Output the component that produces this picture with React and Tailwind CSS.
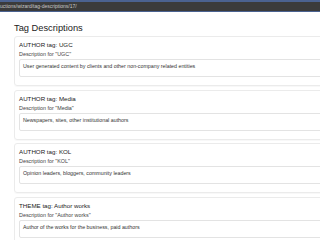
import React from 'react';

const tags = [
    { kind: 'AUTHOR', name: 'UGC', text: 'User generated content by clients and other non-company related entities' },
    { kind: 'AUTHOR', name: 'Media', text: 'Newspapers, sites, other institutional authors' },
    { kind: 'AUTHOR', name: 'KOL', text: 'Opinion leaders, bloggers, community leaders' },
    { kind: 'THEME', name: 'Author works', text: 'Author of the works for the business, paid authors' },
];

const TagCard = ({ kind, name, text }) => (
    <div className="h-[50px] border border-[#ebebeb] rounded-[3px] pt-[4px] pl-[4px] shadow-[0_1px_1px_rgba(0,0,0,0.03)]">
        <div className="h-[8px] leading-[8px] text-[6.2px] font-medium text-[#222] whitespace-nowrap">
            {kind} tag: {name}
        </div>
        <div className="mt-[2px] h-[6px] leading-[6px] text-[5.4px] text-[#444] whitespace-nowrap">
            Description for "{name}"
        </div>
        <div className="mt-[2px] h-[18px] border border-[#e3e3e3] rounded-[2px] pl-[3px] pt-[3px] text-[5.3px] leading-[6px] text-[#333] whitespace-nowrap">
            {text}
        </div>
    </div>
);

export default function App() {
    return (
        <div className="w-[320px] h-[240px] overflow-hidden bg-white font-['Liberation_Sans',Arial,sans-serif]">
            {/* browser url strip */}
            <div className="h-[12px] bg-[#3b3b3b] border-t-[2px] border-b border-t-[#4b6290] border-b-[#4b6290] flex items-center">
                <span className="text-[5px] text-[#c8c8c8] leading-none whitespace-nowrap">uctions/wizard/tag-descriptions/17/</span>
            </div>

            <div className="pl-[14px] w-[420px]">
                <h2 className="h-[24px] pt-[11px] leading-[11px] text-[9.3px] font-medium text-[#222]">Tag Descriptions</h2>
                <div className="flex flex-col gap-[3.5px]">
                    {tags.map(t => (
                        <TagCard key={t.name} {...t} />
                    ))}
                </div>
            </div>
        </div>
    );
}
